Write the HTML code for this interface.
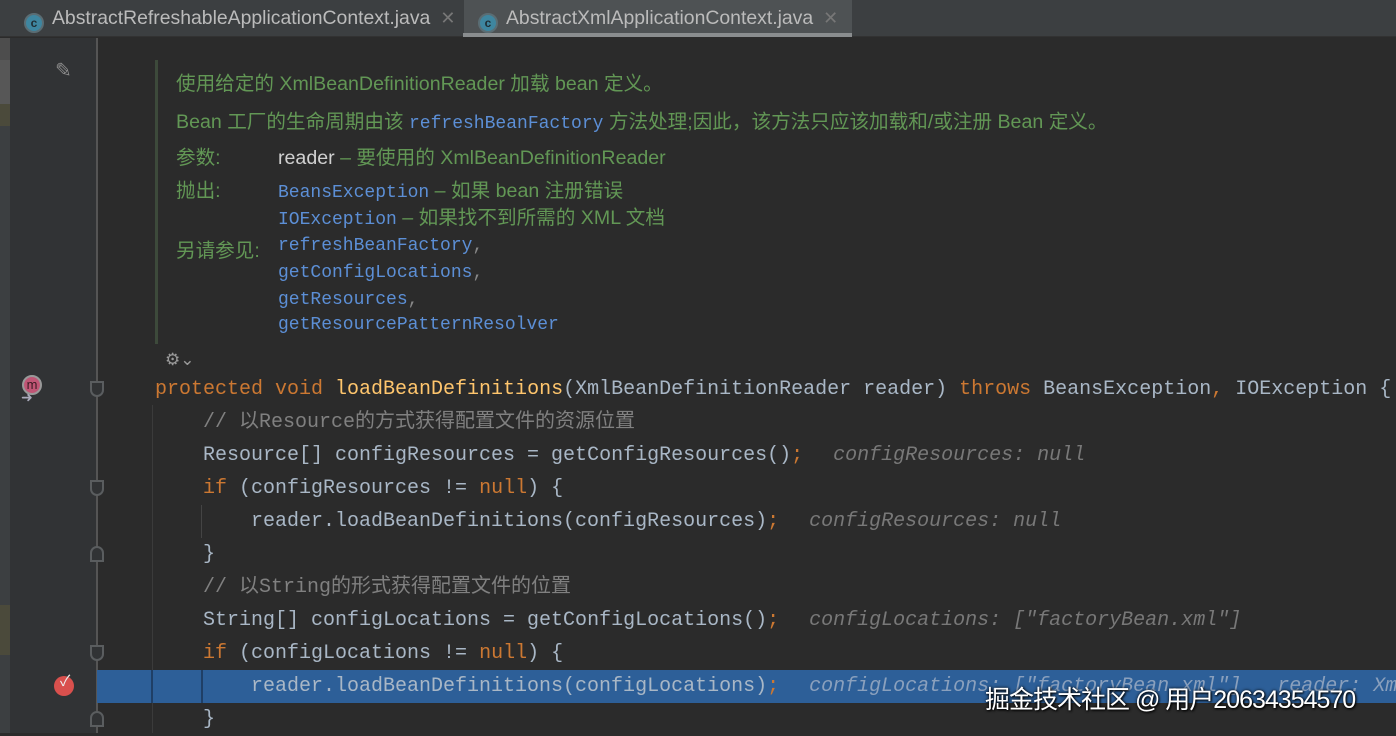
<!DOCTYPE html>
<html><head><meta charset="utf-8"><style>
*{margin:0;padding:0;box-sizing:border-box}
body{width:1396px;height:733px;overflow:hidden;background:#2b2b2b;position:relative;font-family:"Liberation Sans","Noto Sans CJK SC",sans-serif}
.abs{position:absolute;white-space:pre}
.tabs{position:absolute;left:0;top:0;width:1396px;height:37px;background:#3c3f41;border-bottom:1px solid #323232}
.tab{position:absolute;top:0;height:37px;color:#bbbbbb;font-size:19.4px;line-height:36px;white-space:nowrap}
.ci{display:inline-block;width:20px;height:20px;border-radius:50%;background:#3e86a0;color:#1f2d33;font-size:12px;line-height:17px;text-align:center;font-weight:bold;vertical-align:-3px;margin-right:8px;border:2px solid #5a6d74}
.x{color:#777;margin-left:10px;font-size:18px}
.gut{position:absolute;left:10px;top:38px;width:87px;height:695px;background:#313335}
.strip{position:absolute;left:0;top:38px;width:10px;height:695px;background:#3c3f41}
.doc{position:absolute;color:#629755;font-size:19.6px;white-space:pre}
.lk{color:#5c8fd6;font-family:"Liberation Mono",monospace;font-size:18px}
.code{position:absolute;font-family:"Liberation Mono","Noto Sans CJK SC",monospace;font-size:20px;color:#a9b7c6;white-space:pre;line-height:33px;height:33px}
.k{color:#cc7832}.f{color:#ffc66d}.c{color:#808080}.h{color:#787878;font-style:italic;margin-left:6px}
.fold{position:absolute;left:90px;width:14px;height:16px;border:2px solid #5a5d5f;background:#313335}
</style></head><body>
<div class="tabs">
 <div class="tab" style="left:18px;width:446px;padding-left:6px"><span class="ci">c</span>AbstractRefreshableApplicationContext.java<span class="x">✕</span></div>
 <div class="tab" style="left:464px;width:388px;background:#4e5254;padding-left:14px"><span class="ci">c</span>AbstractXmlApplicationContext.java<span class="x">✕</span></div>
 <div class="abs" style="left:463px;top:33px;width:389px;height:4px;background:#8a8d8f"></div>
</div>
<div class="strip"></div>
<div class="abs" style="left:0;top:38px;width:10px;height:22px;background:#4d4d4d"></div>
<div class="abs" style="left:0;top:60px;width:10px;height:44px;background:#575757"></div>
<div class="abs" style="left:0;top:104px;width:10px;height:22px;background:#4b4a3b"></div>
<div class="abs" style="left:0;top:605px;width:10px;height:50px;background:#4b4a3b"></div>
<div class="gut"></div>
<div class="abs" style="left:96px;top:38px;width:2px;height:695px;background:#555"></div>
<div class="abs" style="left:55px;top:58px;color:#8a8a8a;font-size:20px">✎</div>
<div class="abs" style="left:155px;top:60px;width:3px;height:284px;background:#3d4a3b"></div>
<div class="doc" style="left:176px;top:67px">使用给定的 XmlBeanDefinitionReader 加载 bean 定义。</div>
<div class="doc" style="left:176px;top:105px">Bean 工厂的生命周期由该 <span class="lk">refreshBeanFactory</span> 方法处理;因此，该方法只应该加载和/或注册 Bean 定义。</div>
<div class="doc" style="left:176px;top:141px">参数:</div>
<div class="doc" style="left:278px;top:141px"><span style="color:#d0d0d0">reader</span> – 要使用的 XmlBeanDefinitionReader</div>
<div class="doc" style="left:176px;top:174px">抛出:</div>
<div class="doc" style="left:278px;top:174px"><span class="lk">BeansException</span> – 如果 bean 注册错误</div>
<div class="doc" style="left:278px;top:201px"><span class="lk">IOException</span> – 如果找不到所需的 XML 文档</div>
<div class="doc" style="left:176px;top:234px">另请参见:</div>
<div class="doc lk" style="left:278px;top:236px">refreshBeanFactory<span style="color:#888">,</span></div>
<div class="doc lk" style="left:278px;top:263px">getConfigLocations<span style="color:#888">,</span></div>
<div class="doc lk" style="left:278px;top:290px">getResources<span style="color:#888">,</span></div>
<div class="doc lk" style="left:278px;top:315px">getResourcePatternResolver</div>
<div class="abs" style="left:165px;top:350px;color:#999;font-size:17px">⚙⌄</div>
<div class="abs" style="left:97px;top:670px;width:1299px;height:33px;background:#2d5f98"></div>
<div class="abs" style="left:152px;top:405px;width:1px;height:328px;background:#3b3b3b"></div>
<div class="abs" style="left:201px;top:505px;width:1px;height:33px;background:#444"></div>
<div class="abs" style="left:201px;top:670px;width:2px;height:33px;background:#1f3f66"></div>
<div class="abs" style="left:151px;top:670px;width:2px;height:33px;background:#1f3f66"></div>
<div class="abs" style="left:22px;top:375px;width:20px;height:20px;border-radius:50%;background:#c05575;border:2px solid #999;color:#3a1a22;font-size:13px;text-align:center;line-height:16px">m</div>
<div class="abs" style="left:21px;top:389px;color:#aab;font-size:14px">➜</div>
<div class="abs" style="left:54px;top:676px;width:20px;height:20px;border-radius:50%;background:#d9504d"></div>
<div class="abs" style="left:60px;top:670px;color:#eee;font-size:15px">✓</div>
<div class="fold" style="top:381px;border-radius:0 0 7px 7px"></div>
<div class="fold" style="top:480px;border-radius:0 0 7px 7px"></div>
<div class="fold" style="top:546px;border-radius:7px 7px 0 0"></div>
<div class="fold" style="top:645px;border-radius:0 0 7px 7px"></div>
<div class="fold" style="top:711px;border-radius:7px 7px 0 0"></div>
<div class="code" style="left:155px;top:373px"><span class="k">protected void </span><span class="f">loadBeanDefinitions</span>(XmlBeanDefinitionReader reader) <span class="k">throws </span>BeansException<span class="k">, </span>IOException {</div>
<div class="code c" style="left:203px;top:406px">// 以Resource的方式获得配置文件的资源位置</div>
<div class="code" style="left:203px;top:439px">Resource[] configResources = getConfigResources()<span class="k">;</span>  <span class="h">configResources: null</span></div>
<div class="code" style="left:203px;top:472px"><span class="k">if </span>(configResources != <span class="k">null</span>) {</div>
<div class="code" style="left:251px;top:505px">reader.loadBeanDefinitions(configResources)<span class="k">;</span>  <span class="h">configResources: null</span></div>
<div class="code" style="left:203px;top:538px">}</div>
<div class="code c" style="left:203px;top:571px">// 以String的形式获得配置文件的位置</div>
<div class="code" style="left:203px;top:604px">String[] configLocations = getConfigLocations()<span class="k">;</span>  <span class="h">configLocations: ["factoryBean.xml"]</span></div>
<div class="code" style="left:203px;top:637px"><span class="k">if </span>(configLocations != <span class="k">null</span>) {</div>
<div class="code" style="left:251px;top:670px">reader.loadBeanDefinitions(configLocations)<span class="k">;</span>  <span class="h" style="color:#8aa0bd">configLocations: ["factoryBean.xml"]   reader: Xm</span></div>
<div class="code" style="left:203px;top:703px">}</div>
<div class="abs" style="left:985px;top:680px;color:#fff;font-size:25px;text-shadow:0 0 3px #000,1px 1px 2px #000;letter-spacing:-1px">掘金技术社区 @ 用户20634354570</div>
</body></html>
